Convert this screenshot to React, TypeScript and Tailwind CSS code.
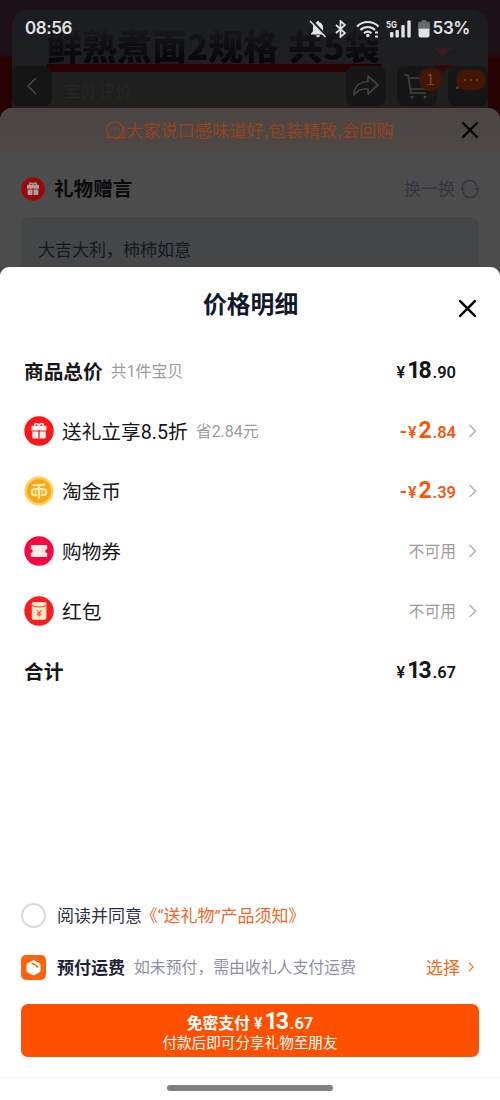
import { ReactNode } from "react";

const Chevron = ({ className }: { className: string }) => (
  <svg viewBox="0 0 8 14" fill="none" stroke="currentColor" className={className}>
    <path d="M1 1l6 6-6 6" strokeWidth="1.5" />
  </svg>
);

const CloseIcon = ({ className }: { className: string }) => (
  <svg viewBox="0 0 18 18" fill="none" stroke="currentColor" strokeWidth="2.4" strokeLinecap="round" className={className}>
    <path d="M2 2l14 14M16 2L2 16" />
  </svg>
);

const GiftIcon = ({ className, bg, fg }: { className: string; bg: string; fg: string }) => (
  <svg viewBox="0 0 30 30" className={className}>
    <circle cx="15" cy="15" r="14.7" fill={bg} />
    <path d="M10.8 9.8C10 6.800 13.500 6.800 15 9.400C16.500 6.800 20 6.800 19.200 9.800" fill="none" stroke={fg} strokeWidth="1.600" />
    <path d="M8.500 9.800h13a1 1 0 0 1 1 1v3.800h-15v-3.800a1 1 0 0 1 1-1z" fill={fg} />
    <path d="M8.300 15.500h13.400v5.500a1.500 1.500 0 0 1-1.500 1.500H9.800a1.500 1.500 0 0 1-1.500-1.500z" fill={fg} />
    <path d="M15 14v8.500" fill="none" stroke={bg} strokeWidth="1.300" />
  </svg>
);

const CoinIcon = () => (
  <svg viewBox="0 0 30 30" className="size-[30px]">
    <circle cx="15" cy="15" r="14.500" fill="#ffd054" />
    <circle cx="15" cy="15" r="12" fill="#faa51a" />
    <g fill="none" stroke="#ffedaa" strokeWidth="2.200" strokeLinecap="round">
      <path d="M9.500 9.200c3.500.2 7.500 0 11-.8M15 9v13" />
      <path d="M12.200 19.200h-1.400c-4 0-4-6.200 0-6.200h8.400c4 0 4 6.200 0 6.200h-1.400" />
      <path d="M11.800 13v4M18.200 13v4" strokeWidth="1.200" />
    </g>
  </svg>
);

const CouponIcon = () => (
  <svg viewBox="0 0 30 30" className="size-[30px]">
    <circle cx="15" cy="15" r="14.700" fill="#fa0541" />
    <path d="M7.800 9h14.400a1 1 0 0 1 1 1v3a2 2 0 0 0 0 4v3a1 1 0 0 1-1 1H7.800a1 1 0 0 1-1-1v-3a2 2 0 0 0 0-4v-3a1 1 0 0 1 1-1z" fill="#ffece6" />
    <path d="M18.500 11.500v1.500M18.500 14.300v1.500M18.500 17.100v1.500" stroke="#f9b9b9" strokeWidth="0.800" />
  </svg>
);

const RedPacketIcon = () => (
  <svg viewBox="0 0 30 30" className="size-[30px]">
    <circle cx="15" cy="15" r="14.700" fill="#fa1d20" />
    <rect x="7.800" y="6" width="14.600" height="17.800" rx="1.800" fill="#ffe8c4" />
    <path d="M8 9.500c4 2 10.400 2 14.200 0" fill="none" stroke="#ef5148" strokeWidth="1.200" />
    <path d="M12.800 14l2.300 2.900 2.300-2.900M15.100 16.900v3.600M12.900 17h4.400M12.900 18.800h4.400" fill="none" stroke="#e8423a" strokeWidth="1" />
  </svg>
);

const Amount = ({ whole, cents, minus }: { whole: string; cents: string; minus?: boolean }) => (
  <span className="flex items-baseline pt-[2px] font-[Roboto,sans-serif] font-semibold leading-6">
    {minus && <span className="mr-px text-[20px] leading-5">-</span>}
    <span className="mr-[2px] text-[16px] leading-5">¥</span>
    <span className="text-[23px] leading-5 font-bold tracking-[-1.800px]">{whole}</span>
    <span className="ml-[2.500px] text-[16.500px] leading-5">.</span>
    <span className="text-[16.500px] leading-5">{cents}</span>
  </span>
);

type RowProps = { icon?: ReactNode; label: string; note?: string; children: ReactNode; arrow?: boolean };

const Row = ({ icon, label, note, children, arrow }: RowProps) => (
  <div className="flex h-[60px] items-center pl-6 pr-[23px] font-[Roboto,'Noto_Sans_CJK_SC',sans-serif] text-[#161616]">
    {icon && <span className="mr-2">{icon}</span>}
    <span className={icon ? "mt-[3px] text-[19.700px] leading-7" : "mt-[3px] text-[19.700px] font-bold leading-7"}>{label}</span>
    {note && <span className="ml-2 mt-[2px] text-[15.900px] leading-6 text-[#9c9c9c]">{note}</span>}
    <div className="ml-auto flex items-center">
      {children}
      <span className="ml-3 flex w-[9px] text-[#b5b5b5]">{arrow && <Chevron className="h-[14px] w-[9px]" />}</span>
    </div>
  </div>
);

const StatusBar = () => (
  <div className="absolute inset-x-0 top-0 z-10 flex h-[57px] items-center pl-[25px] pr-[30px] font-[Inter,sans-serif] text-[17px] font-semibold text-[#e2e2e4]">
    <span className="tracking-[-0.400px]">08:56</span>
    <div className="ml-auto flex items-center">
      <svg viewBox="0 0 18 18" className="mr-[2px] size-[18px]" fill="currentColor">
        <path d="M9 1a1.500 1.500 0 0 0-1.400 1.200C5.200 3 4 5 4 7.500V11l-2 2.600v.8h14v-.8L14 11V7.500c0-2.500-1.200-4.500-3.600-5.300A1.500 1.500 0 0 0 9 1zM7 15.300h4a2 2 0 0 1-4 0z" />
        <path d="M2 0l16 17" stroke="#1c1d21" strokeWidth="2.600" />
        <path d="M1 1l15.500 16" stroke="currentColor" strokeWidth="1.500" />
      </svg>
      <svg viewBox="0 0 12 18" className="ml-[6px] h-[18px] w-3" fill="none" stroke="currentColor" strokeWidth="1.700">
        <path d="M1 5l9 8-4.500 4V1L10 5l-9 8" />
      </svg>
      <svg viewBox="0 0 24 18" className="ml-[9px] h-[18px] w-6" fill="none" stroke="currentColor" strokeWidth="2.200">
        <path d="M1 6.500c6-6 15.500-6 21.500 0M4.500 10c4-4 10.500-4 14.500 0M8 13.200c2.200-2 5.300-2 7.500 0" />
        <circle cx="11.800" cy="15.500" r="1.800" fill="currentColor" stroke="none" />
        <path d="M19 12.500h3M19 16.500h3" strokeWidth="1.800" />
      </svg>
      <svg viewBox="0 0 26 20" className="ml-[6px] h-5 w-[26px]" fill="currentColor">
        <text x="0" y="8.500" fontSize="9.500" fontWeight="700" textLength="11" lengthAdjust="spacingAndGlyphs">5G</text>
        <rect x="4" y="13" width="3.400" height="5.500" rx="1" />
        <rect x="9.500" y="11" width="3.400" height="7.500" rx="1" />
        <rect x="15.300" y="6" width="3.400" height="12.500" rx="1" />
        <rect x="21.300" y="1.500" width="3.400" height="17" rx="1" />
      </svg>
      <svg viewBox="0 0 12 18" className="ml-[6px] h-[18px] w-3">
        <path d="M4 0h4v1.500h1.500A2.500 2.500 0 0 1 12 4v4.500H0V4a2.500 2.500 0 0 1 2.500-2.500H4z" fill="#66676b" />
        <path d="M.5 8.500h11V15a2.500 2.500 0 0 1-2.500 2.500H3A2.500 2.500 0 0 1 .5 15z" fill="currentColor" />
      </svg>
      <span className="ml-[3px] tracking-[-0.400px]">53%</span>
    </div>
  </div>
);

const ProductHeader = () => (
  <header className="h-[108px] bg-linear-to-b from-[#1d1118] from-50% to-[#250102] to-54% px-3 pt-[10px]">
    <div className="h-full rounded-t-[16px] bg-linear-to-b from-[#1b1d21] to-[#201f1e]">
      <div className="flex h-[54px] items-end pl-[35px] text-[35px] font-extrabold leading-[38px]">
        <span className="bg-linear-to-b from-[#191a20] to-[#060608] bg-clip-text text-transparent">鲜熟煮面2规格</span>
        <span className="ml-[10px] bg-linear-to-b from-[#191a20] to-[#060608] bg-clip-text text-transparent">共5袋</span>
        <svg viewBox="0 0 22 28" className="ml-auto mr-[34px] mb-[-9px] h-7 w-[22px] shrink-0">
          <path d="M1 3h20l-10 8z" fill="#3b1a25" />
          <path d="M1 20h20l-10 8z" fill="#35080e" />
        </svg>
      </div>
      <div className="ml-[35px] h-2 w-[334px] bg-[#270000]" />
      <div className="-mt-[6px] flex h-10 items-center">
        <span className="flex size-10 items-center justify-center rounded-lg bg-[#151515]">
          <svg viewBox="0 0 12 18" className="h-[18px] w-3" fill="none" stroke="#434343" strokeWidth="1.700">
            <path d="M10 1L2 9l8 8" />
          </svg>
        </span>
        <span className="ml-3 mt-2 text-base text-[#272727]">宝贝 评价</span>
        <span className="ml-auto flex size-10 items-center justify-center rounded-lg bg-[#151615]">
          <svg viewBox="0 0 28 24" className="h-6 w-7" fill="none" stroke="#414141" strokeWidth="1.700" strokeLinejoin="round">
            <path d="M16 2l10 9-10 9v-5C10 14.500 6 16 2 21c0-8 5-13 14-13.500z" />
          </svg>
        </span>
        <span className="relative ml-[11px] flex size-10 items-center justify-center rounded-lg bg-[#151615]">
          <svg viewBox="0 0 28 28" className="size-7" fill="none" stroke="#414141" strokeWidth="1.600">
            <path d="M1 3h4l3 18h15M5.500 6H25l-2 11H7.500" />
            <circle cx="9" cy="25" r="1.500" fill="#414141" stroke="none" />
            <circle cx="22" cy="25" r="1.500" fill="#414141" stroke="none" />
          </svg>
          <span className="absolute -right-[5px] top-[2px] flex size-[23px] items-center justify-center rounded-full bg-[#431703] text-[15px] text-[#694d40]">1</span>
        </span>
        <span className="relative ml-[11px] size-10 rounded-lg bg-[#151615]">
          <span className="absolute left-2 top-5 size-[3px] rounded-full bg-[#414141]" />
          <span className="absolute left-2 top-1 flex h-5 w-[30px] items-center justify-center gap-1 rounded-full bg-[#431703]">
            <i className="size-[2px] rounded-full bg-[#6b4431]" />
            <i className="size-[2px] rounded-full bg-[#6b4431]" />
            <i className="size-[2px] rounded-full bg-[#6b4431]" />
          </span>
        </span>
      </div>
    </div>
  </header>
);

const GiftSheet = () => (
  <section className="bg-[#210508]">
    <div className="h-[159px] overflow-hidden rounded-t-[12px] bg-[#4c4c4c]">
      <div className="flex h-11 items-center bg-linear-to-b from-[#4b4643] to-[#4c4845] pl-[105px] pr-[21px] text-[17px] text-[#96421d]">
        <svg viewBox="0 0 21 20" className="h-5 w-[21px] shrink-0" fill="none" stroke="currentColor" strokeWidth="1.400">
          <path d="M2 17.500l1-3.500A8 8 0 1 1 6.500 17z" />
          <path d="M17.500 6a7 7 0 0 1 1 9l.8 3-3.300-.6a9 9 0 0 1-6 .8" />
          <path d="M5.500 9.500h1.200M9.200 9.500h1.200M12.900 9.500h1.200" strokeWidth="1.800" />
        </svg>
        <span className="whitespace-nowrap text-[17.200px]">大家说口感味道好,包装精致,会回购</span>
        <CloseIcon className="ml-auto size-[18px] text-black" />
      </div>
      <div className="flex h-[65px] items-center pb-px pl-[21px] pr-[21px] pt-[9px] text-[#343640]">
        <GiftIcon className="size-6" bg="#9b080c" fg="#a7a1a1" />
        <span className="-mt-px ml-[9px] text-[19.600px] font-bold text-[#0a0a0b]">礼物赠言</span>
        <span className="-mt-px ml-auto text-[17px]">换一换</span>
        <svg viewBox="0 0 18 18" className="ml-[6px] size-[18px]" fill="none" stroke="currentColor" strokeWidth="1.600">
          <path d="M1.300 9.500A7.500 7.500 0 0 1 16 6.500M16.700 8.500A7.500 7.500 0 0 1 2 11.500" />
          <path d="M0 8l1.500 2 2-1.500M18 10l-1.500-2-2 1.500" />
        </svg>
      </div>
      <div className="mx-[21px] h-[60px] rounded-t-lg bg-[#444648] px-[17px] pt-[18px] text-[17px] leading-7 text-[#161820]">大吉大利，柿柿如意</div>
    </div>
  </section>
);

const PriceSheet = () => (
  <section className="bg-[#464748]">
    <div className="h-[833px] rounded-t-[9px] bg-white">
      <div className="flex h-[74px] items-center pl-[203px] pr-[23px]">
        <h1 className="-mt-[3px] text-[23.800px] font-bold text-[#12182c]">价格明细</h1>
        <CloseIcon className="ml-auto mt-2 size-[19px] text-black" />
      </div>
      <Row label="商品总价" note="共1件宝贝">
        <Amount whole="18" cents="90" />
      </Row>
      <Row icon={<GiftIcon className="size-[30px]" bg="#fb161a" fg="#fff1ee" />} label="送礼立享8.5折" note="省2.84元" arrow>
        <span className="text-[#f5590e]">
          <Amount minus whole="2" cents="84" />
        </span>
      </Row>
      <Row icon={<CoinIcon />} label="淘金币" arrow>
        <span className="text-[#f5590e]">
          <Amount minus whole="2" cents="39" />
        </span>
      </Row>
      <Row icon={<CouponIcon />} label="购物券" arrow>
        <span className="mt-[2px] text-[15.800px] leading-6 text-[#9c9c9c]">不可用</span>
      </Row>
      <Row icon={<RedPacketIcon />} label="红包" arrow>
        <span className="mt-[2px] text-[15.800px] leading-6 text-[#9c9c9c]">不可用</span>
      </Row>
      <Row label="合计">
        <Amount whole="13" cents="67" />
      </Row>

      <div className="mt-[188px] flex h-[52px] items-center pl-[21px] text-[17px] text-[#2a3042]">
        <span className="mr-[11px] size-[25px] rounded-full border-2 border-[#d9d9d9]" />
        <p className="mt-[2px]">
          阅读并同意
          <span className="ml-[7px] font-[Roboto,'Noto_Sans_CJK_SC',sans-serif] text-[#e9692c] [font-feature-settings:'palt']">《“送礼物”产品须知》</span>
        </p>
      </div>
      <div className="flex h-[52px] items-center px-[21px]">
        <svg viewBox="0 0 25 25" className="size-[25px]">
          <rect width="25" height="25" rx="5" fill="#ff620d" />
          <path d="M11.500 5.500q1-.6 2 0l5 2.800q1 .6 1 1.700v5.500q0 1.100-1 1.700l-5 2.800q-1 .6-2 0l-5-2.800q-1-.6-1-1.700V10q0-1.100 1-1.700z" fill="#fff" />
          <path d="M10.500 8.500c3 .3 4.500 1.500 6.500 4" fill="none" stroke="#ff620d" strokeWidth="1.500" />
        </svg>
        <span className="ml-[11px] text-[17px] font-bold text-[#1c2234]">预付运费</span>
        <span className="ml-[9px] text-[15.850px] text-[#8a91a5]">如未预付，需由收礼人支付运费</span>
        <span className="ml-auto text-[17px] text-[#f46a1b]">选择</span>
        <Chevron className="ml-2 mr-[5px] h-[10px] w-[6px] text-[#f46a1b]" />
      </div>
      <button className="mx-[21px] mt-[11px] flex h-[53px] w-[458px] flex-col items-center justify-center rounded-[7px] bg-[#ff5000] text-white">
        <span className="flex h-[22px] items-center text-[15.800px] font-bold leading-5">
          <span className="mt-[3px]">免密支付</span>
          <span className="ml-1 mt-px">
            <Amount whole="13" cents="67" />
          </span>
        </span>
        <span className="mt-px text-[14.600px] leading-[18px]">付款后即可分享礼物至朋友</span>
      </button>
      <div className="mt-5 flex h-[23px] justify-center border-t border-[#f8f8f8] bg-[#fefefe] pt-[7px]">
        <span className="h-[6px] w-[166px] rounded-full bg-[#808080]" />
      </div>
    </div>
  </section>
);

export default function App() {
  return (
    <main className="relative h-[1100px] w-[500px] overflow-hidden font-['Noto_Sans_CJK_SC',sans-serif]">
      <StatusBar />
      <ProductHeader />
      <GiftSheet />
      <PriceSheet />
    </main>
  );
}
